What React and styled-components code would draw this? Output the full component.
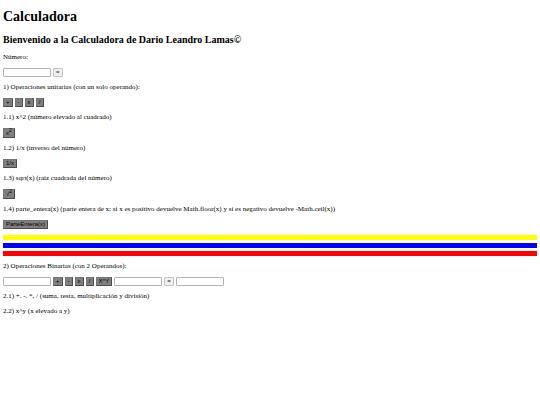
import React, { useState } from "react";
import styled, { createGlobalStyle } from "styled-components";

const operations = {
  "+": (a, b) => a + b,
  "-": (a, b) => a - b,
  x: (a, b) => a * b,
  "/": (a, b) => a / b,
  "X^Y": (a, b) => Math.pow(a, b),
};

export default function App() {
  const [number, setNumber] = useState("");
  const [pending, setPending] = useState(null);
  const [first, setFirst] = useState("");
  const [second, setSecond] = useState("");
  const [operator, setOperator] = useState("+");
  const [result, setResult] = useState("");

  const handleUnary = (fn) => {
    setNumber(String(fn(Number(number))));
  };

  const handlePending = (e) => {
    setPending({ value: Number(number), operator: e.target.value });
    setNumber("");
  };

  const handleEqual = () => {
    if (!pending) return;
    setNumber(
      String(operations[pending.operator](pending.value, Number(number)))
    );
    setPending(null);
  };

  const handleOperator = (e) => {
    setOperator(e.target.value);
  };

  const handleResult = () => {
    setResult(String(operations[operator](Number(first), Number(second))));
  };

  return (
    <Container>
      <GlobalStyle />
      <Title>Calculadora</Title>
      <Subtitle>Bienvenido a la Calculadora de Dario Leandro Lamas©</Subtitle>

      <Label htmlFor="number">Número:</Label>
      <Row>
        <Field
          id="number"
          value={number}
          onChange={(e) => setNumber(e.target.value)}
        />
        <Button onClick={handleEqual}>=</Button>
      </Row>

      <Text>1) Operaciones unitarias (con un solo operando):</Text>
      <Row>
        {["+", "-", "x", "/"].map((op) => (
          <Button $dark key={op} value={op} onClick={handlePending}>
            {op}
          </Button>
        ))}
      </Row>

      <Text>1.1) x^2 (número elevado al cuadrado)</Text>
      <Row>
        <Button $dark $tall onClick={() => handleUnary((x) => x * x)}>
          x<sup>2</sup>
        </Button>
      </Row>

      <Text>1.2) 1/x (inverso del número)</Text>
      <Row>
        <Button $dark onClick={() => handleUnary((x) => 1 / x)}>
          1/x
        </Button>
      </Row>

      <Text>1.3) sqrt(x) (raiz cuadrada del número)</Text>
      <Row>
        <Button $dark $tall onClick={() => handleUnary(Math.sqrt)}>
          √<sup>2</sup>
        </Button>
      </Row>

      <Text>
        1.4) parte_entera(x) (parte entera de x: si x es positivo devuelve
        Math.floor(x) y si es negativo devuelve -Math.ceil(x))
      </Text>
      <Row>
        <Button $dark onClick={() => handleUnary(Math.trunc)}>
          ParteEntera(x)
        </Button>
      </Row>

      <Stripes>
        <Stripe $color="yellow" />
        <Stripe $color="blue" />
        <Stripe $color="red" />
      </Stripes>

      <Text>2) Operaciones Binarias (con 2 Operandos):</Text>
      <Row>
        <Field
          aria-label="X"
          value={first}
          onChange={(e) => setFirst(e.target.value)}
        />
        {Object.keys(operations).map((op) => (
          <Button $dark key={op} value={op} onClick={handleOperator}>
            {op}
          </Button>
        ))}
        <Field
          aria-label="Y"
          value={second}
          onChange={(e) => setSecond(e.target.value)}
        />
        <Button onClick={handleResult}>=</Button>
        <Field aria-label="Resultado" value={result} readOnly />
      </Row>

      <Text>2.1) +. -. *, / (suma, resta, multiplicación y división)</Text>
      <Text>2.2) x^y (x elevado a y)</Text>
    </Container>
  );
}

const GlobalStyle = createGlobalStyle`
  body {
    margin: 0;
    background: white;
    color: black;
    font-family: "Liberation Serif", "Times New Roman", serif;
    font-size: 7px;
    line-height: 9px;
  }
`;

const Container = styled.main`
  display: flex;
  flex-direction: column;
  gap: 6px;
  padding: 9px 3px;
`;

const Title = styled.h1`
  margin: 0;
  font-size: 14px;
  line-height: 16px;
`;

const Subtitle = styled.h2`
  margin: 3px 0 2px;
  font-size: 10px;
  line-height: 11px;
`;

const Text = styled.p`
  margin: 0;
`;

const Label = styled.label`
  align-self: flex-start;
`;

const Row = styled.div`
  display: flex;
  flex-wrap: wrap;
  gap: 2px;
`;

const Field = styled.input`
  box-sizing: border-box;
  width: 48px;
  height: 9px;
  padding: 0 1px;
  border: 1px solid #b4b4b4;
  border-radius: 1px;
  background: white;
  font-family: "Liberation Sans", Arial, sans-serif;
  font-size: 6px;
`;

const Button = styled.button`
  box-sizing: border-box;
  min-width: 8px;
  height: ${({ $tall }) => ($tall ? "10px" : "9px")};
  padding: 0 2px;
  border: 1px solid #c4c4c4;
  border-radius: 1px;
  background: #efefef;
  color: #222;
  font-family: "Liberation Sans", Arial, sans-serif;
  font-size: 6px;
  line-height: 7px;

  ${({ $dark }) =>
    $dark &&
    `
    border-color: #757575 #4c4c4c #4c4c4c #757575;
    border-radius: 0;
    background: gray;
    color: black;
  `}

  sup {
    font-size: 5px;
    line-height: 0;
  }

  :active {
    opacity: 0.9;
  }
`;

const Stripes = styled.div`
  display: flex;
  flex-direction: column;
  gap: 3px;
`;

const Stripe = styled.hr`
  width: 100%;
  height: 5px;
  margin: 0;
  border: none;
  background: ${({ $color }) => $color};
`;
